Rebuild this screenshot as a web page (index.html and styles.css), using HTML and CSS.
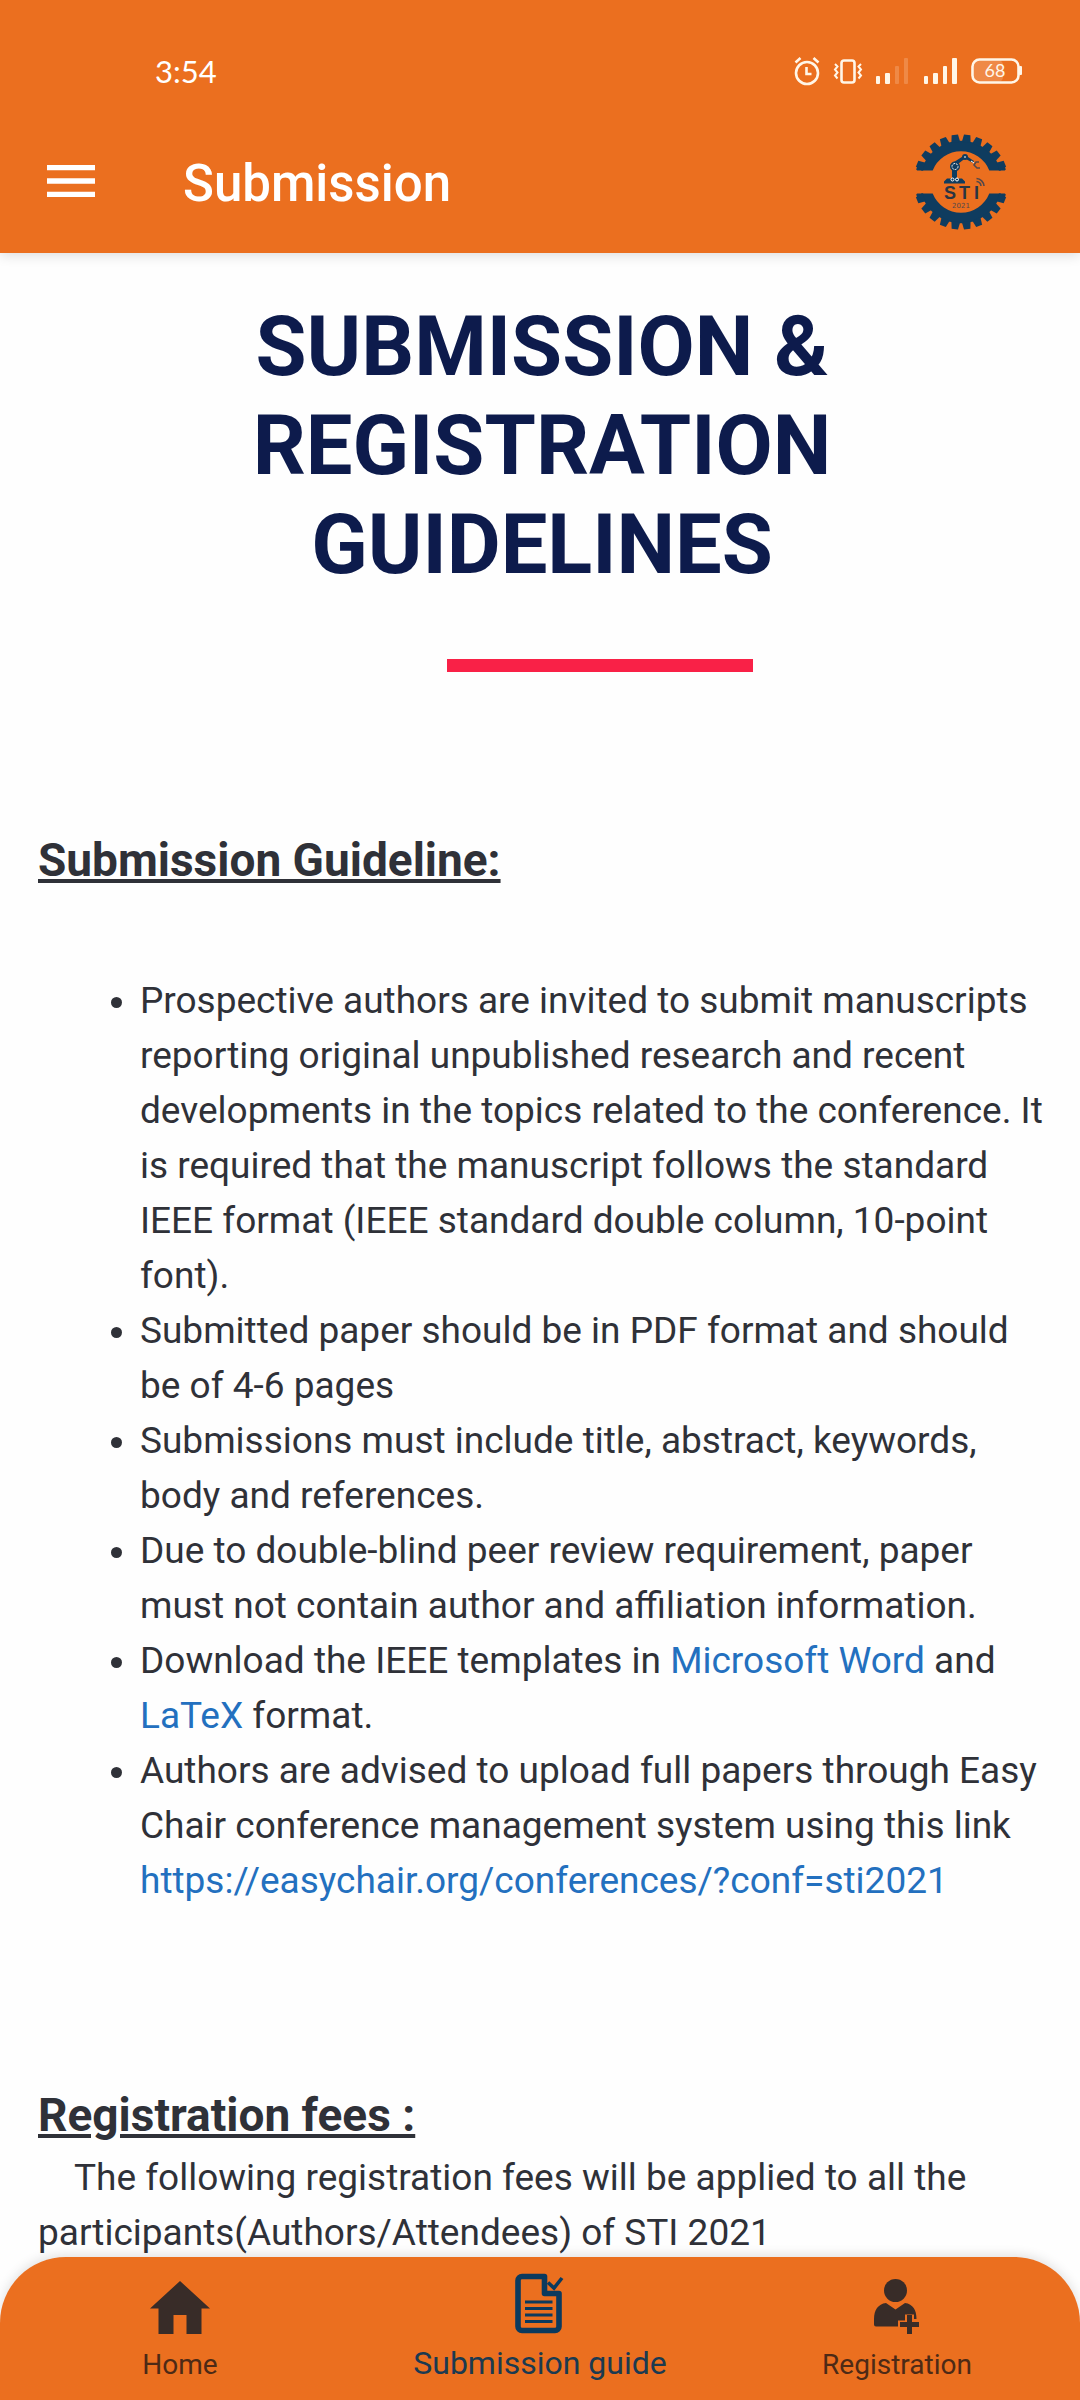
FILE: index.html
```html
<!DOCTYPE html>
<html lang="en">
<head>
<meta charset="utf-8">
<meta name="viewport" content="width=device-width, initial-scale=1">
<title>Submission</title>
<link rel="stylesheet" href="styles.css">
</head>
<body>
<header class="top">
  <div class="status">
    <span class="clock">3:54</span>
    <svg class="status-icons" width="230" height="30" viewBox="0 0 230 30" fill="none" stroke="#fff6e8" aria-hidden="true">
      <circle cx="13" cy="17" r="11" stroke-width="2.6"/>
      <path d="M12.500 11v7h5" stroke-width="2.600"/>
      <path d="M1.500 6.500l5-4.500M24.500 6.500l-5-4.500" stroke-width="2.600"/>
      <rect x="47.500" y="4.500" width="13" height="22" rx="2.500" stroke-width="2.600"/>
      <path d="M41 8l2.500 2.500-2.500 3 2.500 3-2.500 3 2.500 3M67 8l-2.500 2.500 2.500 3-2.500 3 2.500 3-2.500 3" stroke-width="2"/>
      <g stroke="none" fill="#fff6e8">
        <rect x="82" y="20" width="4" height="8" rx="1"/>
        <rect x="91" y="17" width="5" height="11" rx="1"/>
        <rect x="101" y="10" width="4" height="18" rx="1" opacity=".2"/>
        <rect x="110" y="2" width="4" height="26" rx="1" opacity=".2"/>
        <rect x="130" y="20" width="4" height="8" rx="1"/>
        <rect x="139" y="17" width="5" height="11" rx="1"/>
        <rect x="149" y="10" width="4" height="18" rx="1"/>
        <rect x="158" y="2" width="5" height="26" rx="1"/>
        <rect x="180" y="4" width="29" height="22" rx="5" opacity=".2"/>
        <rect x="225" y="10" width="3" height="9" rx="1"/>
      </g>
      <rect x="178.500" y="3.500" width="46" height="23" rx="7" stroke-width="2.600"/>
      <text class="battery" x="201" y="21" text-anchor="middle">68</text>
    </svg>
  </div>
  <div class="bar">
    <button class="menu" type="button" aria-label="Open menu">
      <svg width="64" height="64" viewBox="0 0 24 24" fill="currentColor" aria-hidden="true"><path d="M3 18h18v-2H3v2zm0-5h18v-2H3v2zm0-7v2h18V6H3z"/></svg>
    </button>
    <span class="bar-title">Submission</span>
    <svg class="logo" width="96" height="96" viewBox="-48 -49 96 96" role="img" aria-label="STI 2021">
      <defs>
        <path id="tooth" d="M-4.400-40L-3.200-47.500H3.200L4.400-40z"/>
        <g id="half">
          <path d="M-39.800-11.500A41.500 41.500 0 0 1 39.800-11.500H28.300A30.500 30.500 0 0 0-28.300-11.500z"/>
          <path d="M-44.800-12.500l1 1h6v-5l-5-2zM44.800-12.500l-1 1h-6v-5l5-2z"/>
          <use href="#tooth" transform="rotate(-67.500)"/>
          <use href="#tooth" transform="rotate(-52.500)"/>
          <use href="#tooth" transform="rotate(-37.500)"/>
          <use href="#tooth" transform="rotate(-22.500)"/>
          <use href="#tooth" transform="rotate(-7.500)"/>
          <use href="#tooth" transform="rotate(7.500)"/>
          <use href="#tooth" transform="rotate(22.500)"/>
          <use href="#tooth" transform="rotate(37.500)"/>
          <use href="#tooth" transform="rotate(52.500)"/>
          <use href="#tooth" transform="rotate(67.500)"/>
        </g>
      </defs>
      <g fill="#0f3c5f">
        <use href="#half"/>
        <use href="#half" transform="rotate(180)"/>
        <path d="M-17 1.500v-2l3-3h5v-10h5v10h5l3 3v2z"/>
        <path d="M-7-20L4-27l9 6-1 2-8-4.500-9 7z"/>
        <circle cx="-6" cy="-15.500" r="5"/>
        <circle cx="4" cy="-25" r="3"/>
      </g>
      <g fill="none" stroke="#fff" stroke-width="1">
        <circle cx="-6" cy="-15.500" r="3" stroke-dasharray="2 1"/>
        <circle cx="-8.500" cy="-2.500" r="1.500"/>
        <circle cx="-4" cy="-2.500" r="1.500"/>
        <path d="M3-25h2M10-21l3 2"/>
      </g>
      <path d="M18-20h-3l-2 3 3 3h3M15.500-3.500a8 8 0 0 1 7.500 7.500M15.500-.500a5 5 0 0 1 4.500 4.500" fill="none" stroke="#53484a" stroke-width="1.600"/>
      <text class="logo-name" x="-17 -2 13" y="17">STI</text>
      <text class="logo-year" x="0" y="26" text-anchor="middle">2021</text>
    </svg>
  </div>
</header>

<main class="content">
  <h1 class="title">Submission &amp; Registration Guidelines</h1>
  <div class="rule-row"><hr class="rule"></div>

  <section class="guideline">
    <h2 class="heading">Submission Guideline:</h2>
    <ul class="list">
      <li>Prospective authors are invited to submit manuscripts reporting original unpublished research and recent developments in the topics related to the conference. It is required that the manuscript follows the standard IEEE format (IEEE standard double column, 10-point font).</li>
      <li>Submitted paper should be in PDF format and should be of 4-6 pages</li>
      <li>Submissions must include title, abstract, keywords, body and references.</li>
      <li>Due to double-blind peer review requirement, paper must not contain author and affiliation information.</li>
      <li>Download the IEEE templates in <a href="#word">Microsoft Word</a> and <a href="#latex">LaTeX</a> format.</li>
      <li>Authors are advised to upload full papers through Easy Chair conference management system using this link <a href="https://easychair.org/conferences/?conf=sti2021">https://easychair.org/conferences/?conf=sti2021</a></li>
    </ul>
  </section>

  <section class="fees">
    <h2 class="heading">Registration fees :</h2>
    <p class="fees-text">The following registration fees will be applied to all the participants(Authors/Attendees) of STI 2021</p>
  </section>
</main>

<nav class="tabs" aria-label="Main">
  <a class="tab" href="#home">
    <svg width="60" height="60" viewBox="0 0 60 60" fill="#382c28" aria-hidden="true"><path d="M30 4L60 31.500H51.500V57H36.500V38H23.500V57H8.500V31.500H0z"/></svg>
    <span>Home</span>
  </a>
  <a class="tab tab-active" href="#submission" aria-current="page">
    <svg width="60" height="60" viewBox="0 3 60 60" fill="none" stroke="#0b3a5e" aria-hidden="true">
      <path d="M32.500 2.500H12a4 4 0 0 0-4 4V52.500a4 4 0 0 0 4 4H45a4 4 0 0 0 4-4V19.500H34.500V2.500z" stroke-width="5.600" stroke-linejoin="round"/>
      <path d="M15 28h27.500M15 34.500h27.500M15 41h27.500M15 47.500h27.500" stroke-width="2.800"/>
      <path d="M38 8.500l6 5.500 8-10" stroke-width="3.600"/>
    </svg>
    <span>Submission guide</span>
  </a>
  <a class="tab" href="#registration">
    <svg width="60" height="60" viewBox="0 0 60 60" fill="#382c28" aria-hidden="true">
      <circle cx="28.500" cy="13.500" r="11.500"/>
      <path d="M19 26l9.500 6.500L38 26c8 1 11.500 7 11.500 16h-2.500v-4.500h-9v6h-7v6H9a2 2 0 0 1-2-2V42c0-9 4-15 12-16z"/>
      <path d="M40 38h5v7h7v5h-7v7h-5v-7h-7v-5h7z"/>
    </svg>
    <span>Registration</span>
  </a>
</nav>
</body>
</html>
```
FILE: styles.css
```css
* {
  box-sizing: border-box;
}

svg {
  overflow: visible;
}

body {
  margin: 0;
  height: 100vh;
  display: flex;
  flex-direction: column;
  background: #fefefe;
  color: #2f3138;
  font-family: Roboto, "Liberation Sans", sans-serif;
  font-size: 37px;
  line-height: 55px;
}

.top {
  position: relative;
  z-index: 1;
  background: #eb6f1f;
  color: #fff;
  box-shadow: 0 2px 12px rgba(0, 0, 0, 0.14);
}

.status {
  display: flex;
  align-items: center;
  justify-content: space-between;
  padding: 50px 56px 0 155px;
  height: 92px;
}

.clock {
  font-family: Lato, sans-serif;
  font-size: 31px;
  line-height: 40px;
}

.battery {
  font-family: Lato, sans-serif;
  font-size: 18px;
  fill: #fff6e8;
  stroke: none;
}

.bar {
  display: flex;
  align-items: center;
  padding: 16px 71px 0 39px;
  height: 161px;
}

.menu {
  display: flex;
  padding: 0;
  border: 0;
  background: none;
  color: inherit;
}

.bar-title {
  flex: 1;
  padding: 6px 0 0 80px;
  font-size: 51px;
  font-weight: 500;
}

.logo-name {
  font: bold 18px "Liberation Sans", sans-serif;
  fill: #2a3542;
}

.logo-year {
  font: 7px "DejaVu Sans", sans-serif;
  fill: #53484a;
}

.content {
  flex: 1 1 0;
  min-height: 0;
  overflow-y: auto;
  scrollbar-width: none;
  padding: 44px 24px 0 38px;
}

.title {
  max-width: 700px;
  margin: 0 auto;
  padding-right: 10px;
  color: #0d1b4c;
  font-size: 83px;
  font-weight: 700;
  line-height: 99px;
  text-align: center;
  text-transform: uppercase;
}

.rule-row {
  display: flex;
  justify-content: center;
  padding: 65px 0 0 106px;
}

.rule {
  width: 306px;
  height: 13px;
  margin: 0;
  border: 0;
  background: #f92147;
}

.guideline {
  padding-top: 161px;
}

.heading {
  margin: 0;
  font-size: 46px;
  font-weight: 700;
  line-height: 55px;
  text-decoration: underline;
}

.list {
  margin: 85px 0 0;
  padding: 0 0 0 102px;
}

.list a {
  color: #2370bf;
  text-decoration: none;
}

.fees {
  padding-top: 180px;
}

.fees-text {
  margin: 7px 0 0;
  text-indent: 36px;
}

.tabs {
  position: relative;
  z-index: 1;
  display: grid;
  grid-template-columns: repeat(3, 1fr);
  background: #eb6f1f;
  border-radius: 66px 66px 0 0;
  box-shadow: 0 -2px 12px rgba(0, 0, 0, 0.12);
}

.tab {
  display: flex;
  flex-direction: column;
  align-items: center;
  gap: 8px;
  padding: 20px 0 15px;
  color: #4d2a16;
  font-size: 28px;
  line-height: 40px;
  text-decoration: none;
}

.tab:last-child {
  padding-right: 6px;
}

.tab-active {
  gap: 6px;
  color: #1b3a50;
  font-size: 32px;
}
```
